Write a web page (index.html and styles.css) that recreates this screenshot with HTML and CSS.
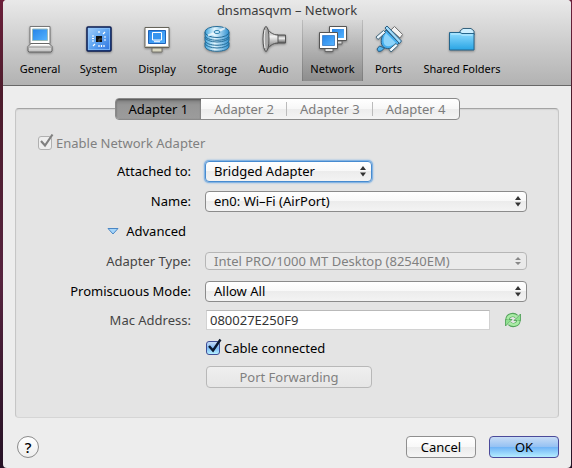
FILE: index.html
```html
<!DOCTYPE html>
<html lang="en">
<head>
<meta charset="utf-8">
<title>dnsmasqvm – Network</title>
<link rel="stylesheet" href="styles.css">
</head>
<body>
<svg class="defs" aria-hidden="true">
  <defs>
    <linearGradient id="screen" x1="0" y1="0" x2="1" y2="1"><stop offset="0" stop-color="#2583e8"/><stop offset="1" stop-color="#55b4ff"/></linearGradient>
    <linearGradient id="chip" x1="0" y1="0" x2="1" y2="1"><stop offset="0" stop-color="#a5d0fb"/><stop offset=".5" stop-color="#5fa5f2"/><stop offset="1" stop-color="#2a6fdc"/></linearGradient>
    <linearGradient id="disk" x1="0" y1="0" x2="1" y2="0"><stop offset="0" stop-color="#3fa4dc"/><stop offset=".4" stop-color="#e4f7ff"/><stop offset="1" stop-color="#2d8fd0"/></linearGradient>
    <linearGradient id="metal" x1="0" y1="0" x2="0" y2="1"><stop offset="0" stop-color="#777"/><stop offset=".4" stop-color="#f2f2f2"/><stop offset="1" stop-color="#555"/></linearGradient>
    <linearGradient id="folder" x1="0" y1="0" x2="0" y2="1"><stop offset="0" stop-color="#8fdcff"/><stop offset="1" stop-color="#28a4e4"/></linearGradient>
    <linearGradient id="case" x1="0" y1="0" x2="0" y2="1"><stop offset="0" stop-color="#fff"/><stop offset="1" stop-color="#bbb"/></linearGradient>
  </defs>
</svg>
<div class="window">
  <header class="toolbar">
    <h1 class="title">dnsmasqvm – Network</h1>
    <nav class="tools" aria-label="Settings">
      <button class="tool" type="button">
        <svg width="28" height="28" viewBox="0 0 28 28"><path d="M4 1.500h20v17H4z" fill="#fff" stroke="#777"/><path d="M6.500 4h15v11.500h-15z" fill="url(#screen)" stroke="#9bb"/><path d="M5 18.500h18l3 3v4.500l-1 1H3l-1-1v-4.500z" fill="url(#case)" stroke="#666"/><path d="M3 22h22" stroke="#888"/><path d="M7 19.500h14" stroke="#fff"/></svg>
        <span>General</span>
      </button>
      <button class="tool" type="button">
        <svg width="28" height="28" viewBox="0 0 28 28"><rect x="2" y="2" width="24" height="24" rx="1" fill="url(#chip)" stroke="#0b1c52" stroke-width="1.500"/><rect x="3.500" y="3.500" width="21" height="21" fill="none" stroke="#8fc3fa" stroke-opacity=".7"/><rect x="11" y="11" width="6" height="6" fill="#111"/><path d="M14 17v-3h3" stroke="#555" fill="none"/><path d="M14 6v2M18 9l2-2M7 11h2M7 13.500h2M7 16h2M19 12h2M19 15h2M8 21l2-2M14 20v2M16.500 20v2M19 20v2" stroke="#fff" stroke-width="1.200" fill="none"/></svg>
        <span>System</span>
      </button>
      <button class="tool" type="button">
        <svg width="28" height="28" viewBox="0 0 28 28"><path d="M9 23h10v4H9z" fill="#d8d6c0" stroke="#77756a"/><path d="M2 2.500h24v20H2z" fill="#fff" stroke="#66645a"/><path d="M3 21.500h22" stroke="#c9c7b8"/><path d="M5.500 5.500h17v13h-17z" fill="url(#screen)" stroke="#1e63b8"/><path d="M9.500 7.500h9v7.500h-9z" fill="#3694ef" stroke="#fff"/><path d="M11 16.500h6" stroke="#d9eaff" stroke-width="1.500"/></svg>
        <span>Display</span>
      </button>
      <button class="tool" type="button">
        <svg width="28" height="28" viewBox="0 0 28 28"><g stroke="#246c98" fill="url(#disk)"><path d="M2 18v3c0 7 24 7 24 0v-3z"/><ellipse cx="14" cy="18" rx="12" ry="5"/><path d="M2 12v3c0 7 24 7 24 0v-3z"/><ellipse cx="14" cy="12" rx="12" ry="5"/><path d="M2 7v3c0 7 24 7 24 0V7z"/><ellipse cx="14" cy="7" rx="12" ry="5.500"/></g><path d="M14 7L5 10.500M14 7l8-4" stroke="#fff" stroke-width="2" opacity=".7"/><ellipse cx="14" cy="7" rx="3" ry="1.500" fill="#cfefff" stroke="#2b7eac"/></svg>
        <span>Storage</span>
      </button>
      <button class="tool" type="button">
        <svg width="28" height="28" viewBox="0 0 28 28"><path d="M15 10h10.500v8H15z" fill="url(#metal)" stroke="#555"/><path d="M6 2c3 5 7 8 12 8v8c-5 0-9 3-12 8z" fill="url(#metal)" stroke="#555"/><ellipse cx="6" cy="14" rx="3" ry="12.500" fill="#aaa" stroke="#555"/><path d="M5 5c-1 5-1 13 0 18" fill="none" stroke="#eee"/></svg>
        <span>Audio</span>
      </button>
      <button class="tool selected" type="button" aria-pressed="true">
        <svg width="30" height="28" viewBox="0 0 30 28"><path d="M17 16h7v3h-7z" fill="#ddd" stroke="#666"/><path d="M11.500 1.500h17v14h-17z" fill="#fff" stroke="#555"/><path d="M14 4h12v9H14z" fill="url(#screen)"/><path d="M7 23h8v3.500H7z" fill="#ddd" stroke="#666"/><path d="M1.500 7.500h18v16h-18z" fill="#fff" stroke="#555"/><path d="M4.500 10.500h12v10h-12z" fill="url(#screen)" stroke="#4b8bd0"/></svg>
        <span>Network</span>
      </button>
      <button class="tool" type="button">
        <svg width="28" height="28" viewBox="0 0 28 28"><path d="M16 5l3.500-3.500 8 8L25 13z" fill="#f4f4f4" stroke="#777"/><path d="M4.500 21l-2.500 3 1.500 2.500 3-.5 3-3z" fill="#54b5ee" stroke="#285f86"/><path d="M11 5l13 13c-4 5-11 7-15 4.500S5 12 11 5z" fill="#45aeee" stroke="#285f86"/><path d="M11 8l10 10c-4 3-8 4-10.500 2.500S7.500 13 11 8z" fill="#8dd4fb"/><path d="M10 3l2-2 14.500 15-2 2.500z" fill="#a4dcfa" stroke="#285f86"/><path d="M1 12l7.500-6.500 2 2L3 14.500zM14 24.500l7-6 2 2-7 6.500z" fill="#eef8ff" stroke="#43677c"/></svg>
        <span>Ports</span>
      </button>
      <button class="tool" type="button">
        <svg width="28" height="28" viewBox="0 0 28 28"><path d="M12 10V6l3-2.500h8L26 6v4z" fill="#cdefff" stroke="#35637e"/><path d="M1.500 7.500H12l2 1h12v16.500H1.500z" fill="url(#folder)" stroke="#24658c"/><path d="M3 9h9.500l1 1h11" fill="none" stroke="#c2edff"/></svg>
        <span>Shared Folders</span>
      </button>
    </nav>
  </header>

  <main class="content">
    <div class="tabs" role="tablist">
      <button class="tab active" role="tab" aria-selected="true" type="button">Adapter 1</button>
      <button class="tab" role="tab" aria-selected="false" type="button">Adapter 2</button>
      <button class="tab" role="tab" aria-selected="false" type="button">Adapter 3</button>
      <button class="tab" role="tab" aria-selected="false" type="button">Adapter 4</button>
    </div>
    <section class="panel">
      <label class="check muted"><span class="box"><input type="checkbox" checked disabled><svg class="tick" width="16" height="16" viewBox="0 0 16 16"><path d="M3 8l4 4.500L14.500 1.500" fill="none" stroke="currentColor" stroke-width="2.200"/></svg></span>Enable Network Adapter</label>
      <div class="form">
        <label class="label" for="attached">Attached to:</label>
        <div class="field"><span class="picker half"><select id="attached" class="focused"><option>Bridged Adapter</option></select><svg class="arrows" width="6" height="12" viewBox="0 0 6 12"><path d="M0 5L3 1l3 4zM0 7.500l3 4 3-4z"/></svg></span></div>

        <label class="label" for="name">Name:</label>
        <div class="field"><span class="picker"><select id="name"><option>en0: Wi–Fi (AirPort)</option></select><svg class="arrows" width="6" height="12" viewBox="0 0 6 12"><path d="M0 5L3 1l3 4zM0 7.500l3 4 3-4z"/></svg></span></div>

        <button class="advanced" type="button" aria-expanded="true"><svg width="12" height="8" viewBox="0 0 12 8"><path d="M1 1.500h10L6 7z" fill="#a5d5fa" stroke="#4a86c4"/></svg>Advanced</button>
        <div class="field"></div>

        <label class="label dim" for="type">Adapter Type:</label>
        <div class="field"><span class="picker"><select id="type" disabled><option>Intel PRO/1000 MT Desktop (82540EM)</option></select><svg class="arrows" width="6" height="12" viewBox="0 0 6 12"><path d="M0 5L3 2l3 3zM0 7l3 3 3-3z"/></svg></span></div>

        <label class="label" for="mode">Promiscuous Mode:</label>
        <div class="field"><span class="picker"><select id="mode"><option>Allow All</option></select><svg class="arrows" width="6" height="12" viewBox="0 0 6 12"><path d="M0 5L3 1l3 4zM0 7.500l3 4 3-4z"/></svg></span></div>

        <label class="label dim" for="mac">Mac Address:</label>
        <div class="field inset tight"><input id="mac" class="text" type="text" value="080027E250F9" readonly><button class="refresh" type="button" aria-label="Generate new address"><svg width="16" height="16" viewBox="0 0 16 16"><path d="M2.500 8C2.500 3 8.500 1.500 11.500 4.500M13.500 8C13.500 13 7.500 14.500 4.500 11.500" fill="none" stroke="#55a35c" stroke-width="4.400"/><path d="M15.500 2v6.500H9zM.5 14V7.500H7z" fill="#8fe08f" stroke="#55a35c" stroke-width=".9"/><path d="M2.500 7.500C3 3 8.500 2 12 5M13.500 8.500C13 13 7.500 14 4 11" fill="none" stroke="#a9eca5" stroke-width="2.600"/></svg></button></div>

        <div></div>
        <div class="field inset tight"><label class="check"><span class="box"><input type="checkbox" checked><svg class="tick" width="16" height="16" viewBox="0 0 16 16"><path d="M3 8l4 4.500L14.500 1.500" fill="none" stroke="currentColor" stroke-width="2.400"/></svg></span>Cable connected</label></div>

        <div></div>
        <div class="field inset"><button class="btn forward" type="button" disabled>Port Forwarding</button></div>
      </div>
    </section>
    <footer class="actions">
      <button class="help" type="button" aria-label="Help">?</button>
      <button class="btn" type="button">Cancel</button>
      <button class="btn primary" type="button">OK</button>
    </footer>
  </main>
</div>
</body>
</html>
```
FILE: styles.css
```css
* { box-sizing: border-box; }

body {
  margin: 0;
  min-height: 100vh;
  display: flex;
  padding: 0 1px 0 3px;
  background: linear-gradient(#6b1f3a, #4d1c2c 20%, #57243f 60%, #251225);
  font: 13px/20px "Noto Sans", sans-serif;
  color: #000;
}

button, input, select { font: inherit; color: inherit; margin: 0; }
button { padding: 0; border: 0; background: none; }

.defs { position: absolute; width: 0; height: 0; }

.window {
  flex: 1;
  display: flex;
  flex-direction: column;
  background: #ededed;
  border-radius: 4px;
  overflow: hidden;
}

.toolbar {
  height: 86px;
  border-bottom: 1px solid #686868;
  background: linear-gradient(#e9e9e9, #d0d0d0 45%, #b2b2b2);
}

.title {
  margin: 0;
  height: 20px;
  font-size: 13px;
  font-weight: 400;
  line-height: 20px;
  text-align: center;
  color: #3c3c3c;
}

.tools {
  display: grid;
  grid-template-columns: 56px 53px 56px 56px 49px 61px 43px 96px;
  gap: 4px;
  padding-left: 9px;
}

.tool {
  display: flex;
  flex-direction: column;
  align-items: center;
  gap: 7px;
  height: 61px;
  padding-top: 5px;
  font-size: 11px;
  line-height: 18px;
  white-space: nowrap;
}

.tool svg { filter: drop-shadow(0 1px 1px rgba(0, 0, 0, .35)); }

.selected {
  background: linear-gradient(rgba(0, 0, 0, .02), rgba(0, 0, 0, .22));
  box-shadow: inset 1px 0 rgba(0, 0, 0, .12), inset -1px 0 rgba(0, 0, 0, .12);
}

.content { padding: 12px 12px 9px; }

.tabs {
  position: relative;
  display: flex;
  width: 345px;
  height: 22px;
  margin: 0 auto;
  border: 1px solid #8a8a8a;
  border-radius: 4px;
  background: linear-gradient(#fff, #f7f7f7 50%, #ececec 50%, #f4f4f4);
  overflow: hidden;
}

.tab {
  flex: 1;
  line-height: 18px;
  color: #7c7c7c;
  background: linear-gradient(#bbb, #bbb) right center / 1px 14px no-repeat;
}

.tab:last-child { background: none; }

.tab.active {
  color: #000;
  background: linear-gradient(#7e7e7e, #969696 30%, #9c9c9c);
  box-shadow: inset 0 1px 2px #555;
}

.panel {
  margin-top: -12px;
  padding: 24px 31px 25px 22px;
  border: 1px solid #c6c6c6;
  border-top-color: #a4a4a4;
  border-bottom-color: #d5d5d5;
  border-radius: 4px;
  background: #e4e4e4;
  box-shadow: inset 0 1px 1px #d3d3d3;
}

.check { display: inline-flex; align-items: center; gap: 4px; }
.muted { display: flex; color: #808080; }
.box { position: relative; width: 14px; height: 14px; }

.box input {
  appearance: none;
  display: block;
  width: 14px;
  height: 14px;
  border: 1px solid #3f4d96;
  border-radius: 3px;
  background: linear-gradient(#c6dbf5, #7db9f5 50%, #b5f0ff);
}

.box input:disabled { border-color: #b0b0b0; background: #eee; }
.tick { position: absolute; left: 0; top: -3px; color: #0b1830; }
.muted .tick { color: #808080; }

.form {
  display: grid;
  grid-template-columns: 153px 1fr;
  column-gap: 14px;
  margin-top: 3px;
}

.label { text-align: right; align-self: center; white-space: nowrap; }
.dim { color: #444; }
.field { display: flex; align-items: center; height: 30px; }
.inset { padding-left: 1px; }
.tight { height: 28px; }
.picker { position: relative; display: flex; flex: 1; }
.half { flex: 0 0 167px; }

select {
  appearance: none;
  width: 100%;
  height: 21px;
  padding: 0 16px 0 8px;
  border: 1px solid #8b8b8b;
  border-radius: 4px;
  background: linear-gradient(#fff, #f8f8f8 50%, #ececec 50%, #f3f3f3);
  line-height: 18px;
}

.focused {
  outline: none;
  border-color: #478bd0;
  box-shadow: 0 0 0 1px #85b4e2, 0 0 2px 1px #7aaee2;
}

select:disabled {
  height: 18px;
  border-color: #b6b6b6;
  background: #eaeaea;
  color: #808080;
  line-height: 16px;
  opacity: 1;
}

.arrows { position: absolute; right: 6px; top: 50%; margin-top: -6px; fill: #333; pointer-events: none; }
select:disabled + .arrows { fill: #888; }

.advanced {
  display: flex;
  align-items: center;
  justify-content: flex-end;
  gap: 7px;
  padding-right: 5px;
}

.text {
  width: 284px;
  height: 20px;
  padding: 0 3px;
  border: 1px solid #d2d2d2;
  border-top-color: #b9b9b9;
  background: #fff;
  color: #333;
  outline: none;
}

.refresh { width: 16px; height: 16px; margin-left: 15px; }
.refresh svg { display: block; }

.btn {
  width: 70px;
  height: 22px;
  border: 1px solid #8f8f8f;
  border-radius: 4px;
  background: linear-gradient(#fff, #f8f8f8 50%, #ebebeb 50%, #f5f5f5);
  line-height: 18px;
}

.forward { width: 166px; }
.forward:disabled { border-color: #b8b8b8; background: linear-gradient(#efefef, #e6e6e6); color: #808080; }

.primary { border-color: #4b4a9a; background: linear-gradient(#c8dcf5, #94c1f3 50%, #6eb2f6 50%, #b4edff); }

.actions { display: flex; align-items: center; gap: 13px; margin-top: 18px; }

.help {
  width: 22px;
  height: 22px;
  margin: 0 auto 0 2px;
  border: 1px solid #8b8b8b;
  border-radius: 50%;
  background: linear-gradient(#fff, #eee);
  font-size: 15px;
  font-weight: 500;
  line-height: 18px;
}
```
